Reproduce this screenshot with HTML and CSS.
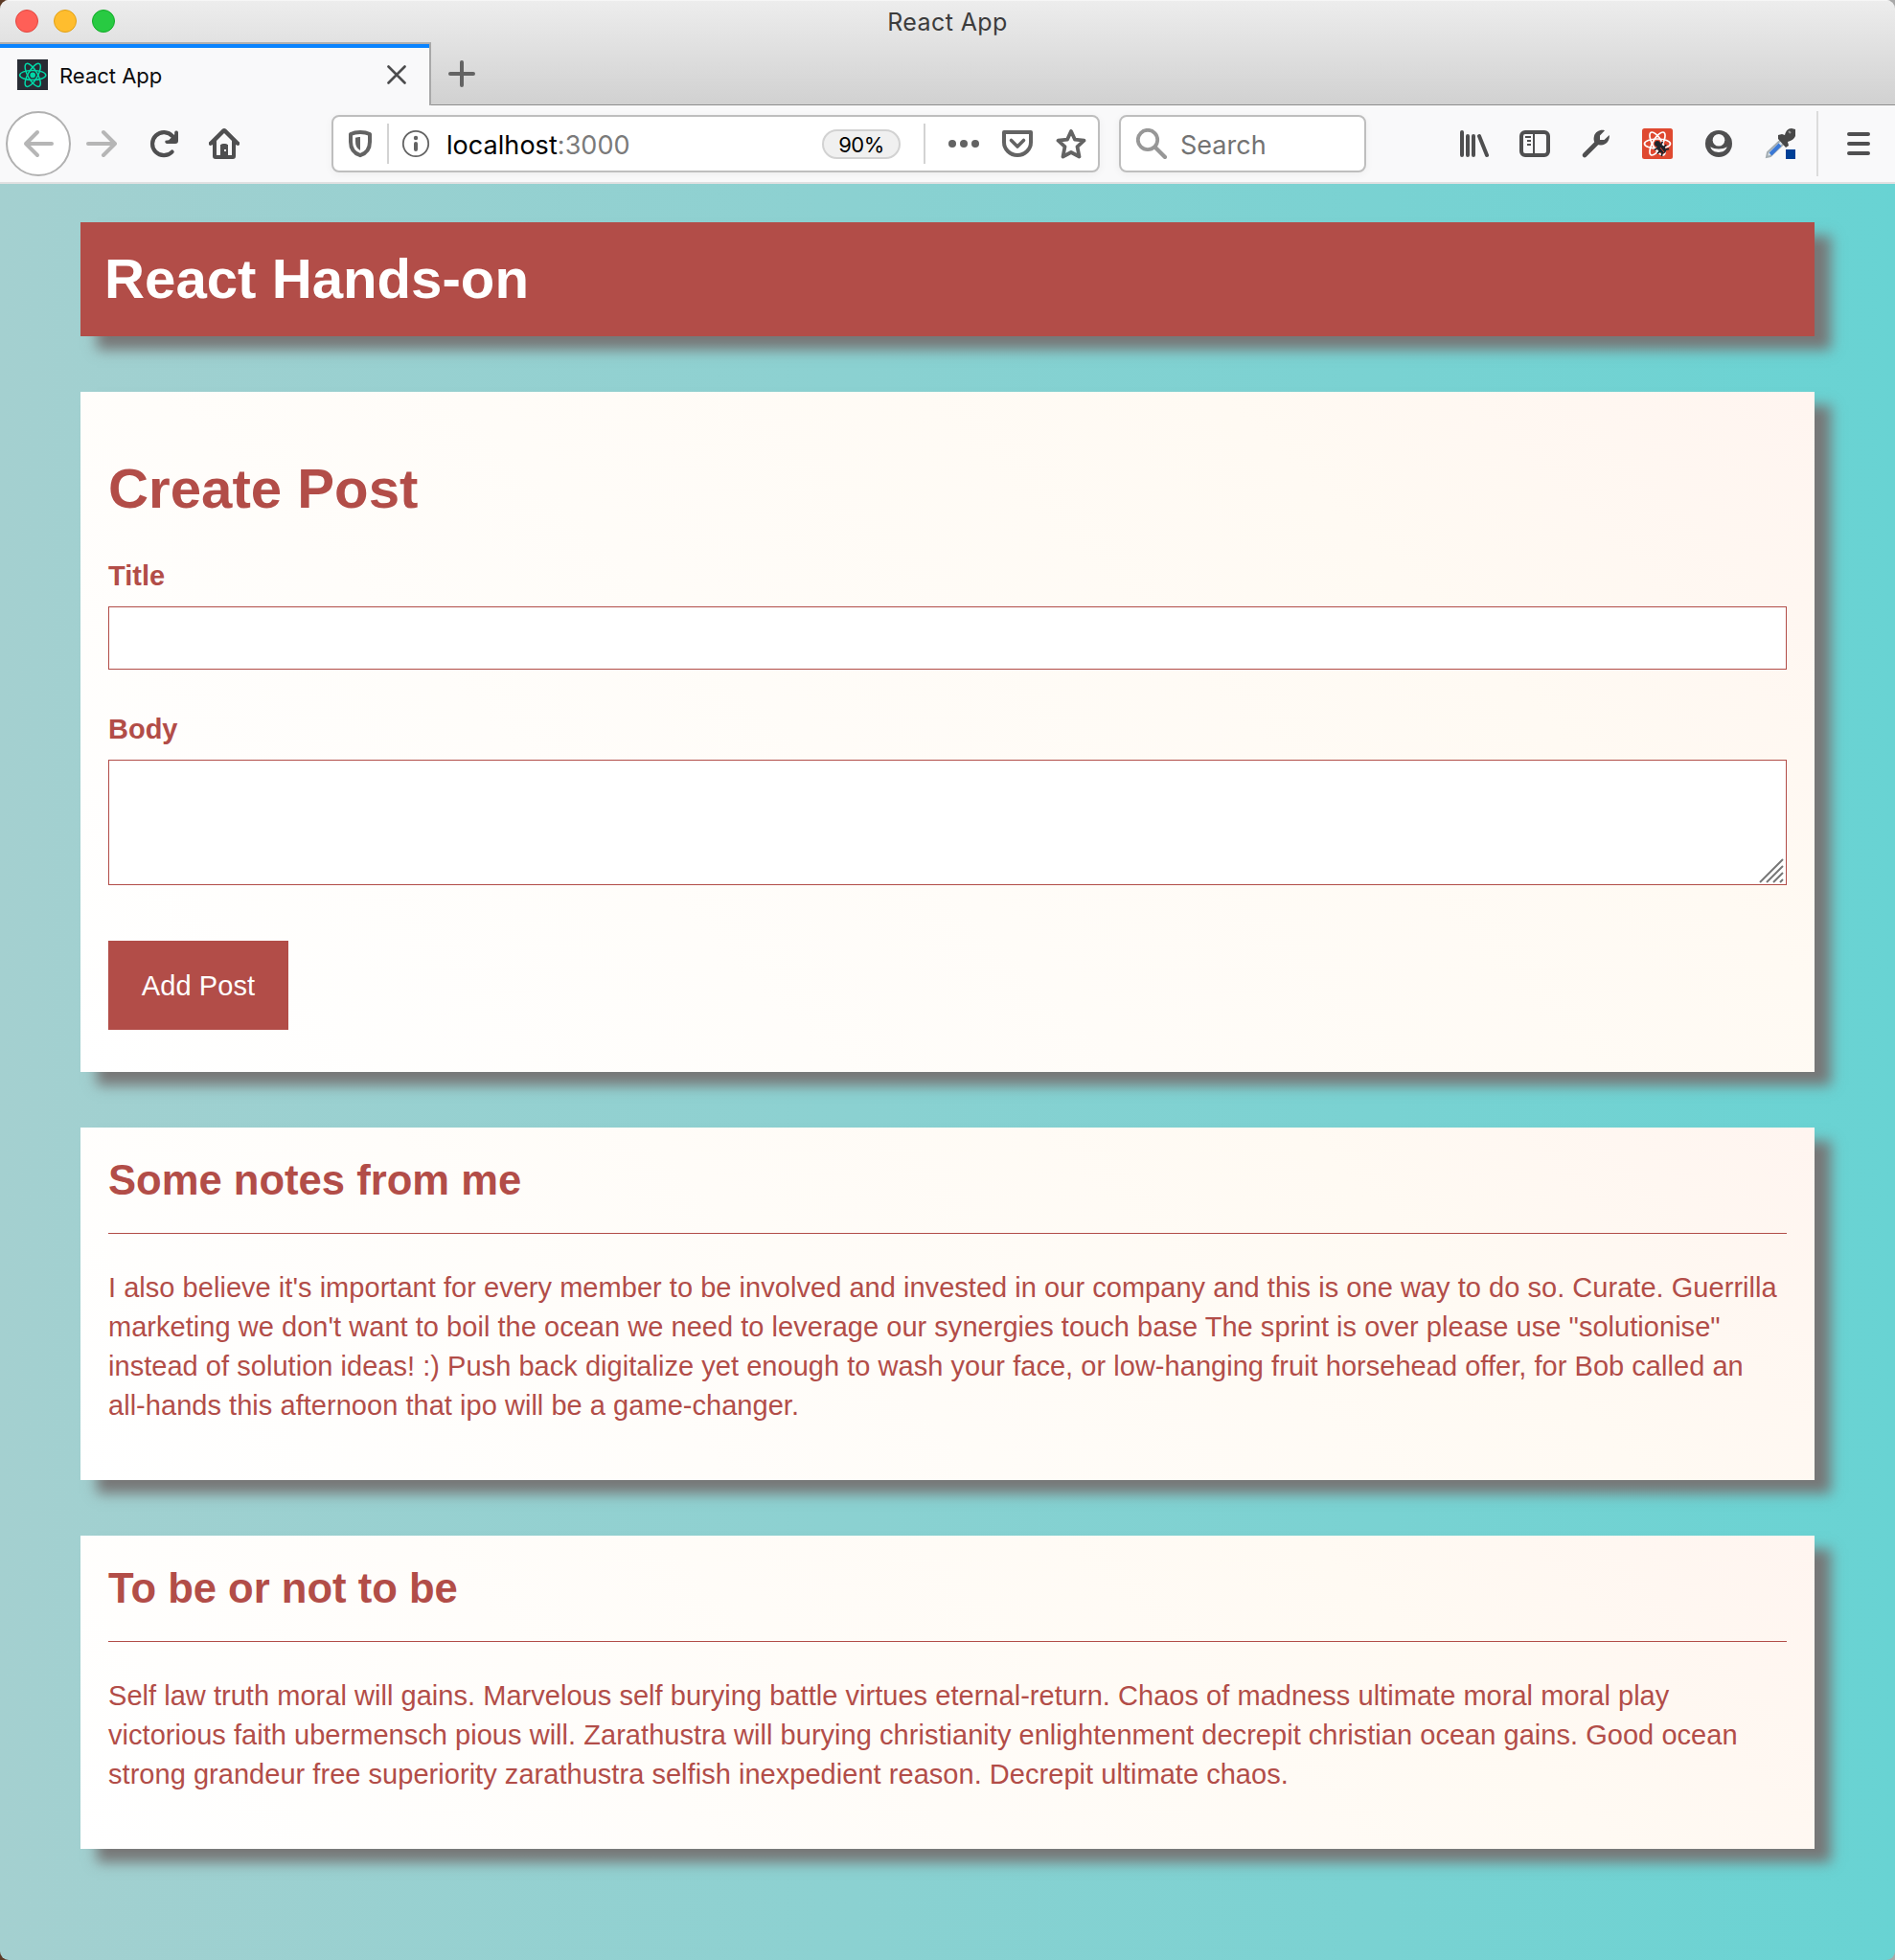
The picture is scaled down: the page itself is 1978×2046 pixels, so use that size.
FILE: index.html
```html
<!DOCTYPE html>
<html lang="en">
<head>
<meta charset="utf-8">
<title>React App</title>
<link rel="stylesheet" href="styles.css">
</head>
<body>
<div class="window">
  <header class="chrome">
    <div class="titlebar">
      <div class="lights"><i class="light red"></i><i class="light yellow"></i><i class="light green"></i></div>
      <span class="window-title">React App</span>
    </div>
    <div class="tabstrip">
      <div class="tab">
        <svg class="favicon" viewBox="0 0 32 32"><rect width="32" height="32" fill="#282c34"/><g fill="none" stroke="#00d8a8" stroke-width="1.5"><ellipse cx="16.2" cy="16.4" rx="13.6" ry="5"/><ellipse cx="16.2" cy="16.4" rx="13.6" ry="5" transform="rotate(60 16.2 16.4)"/><ellipse cx="16.2" cy="16.4" rx="13.6" ry="5" transform="rotate(120 16.2 16.4)"/></g><circle cx="16.2" cy="16.4" r="2.8" fill="#00d8a8"/></svg>
        <span class="tab-title">React App</span>
        <svg class="close" viewBox="0 0 20 20"><path d="M1.5 1.5l17 17M18.5 1.5l-17 17" stroke="#4c4c4d" stroke-width="2.6" stroke-linecap="round"/></svg>
      </div>
      <div class="strip-rest">
        <svg class="plus" viewBox="0 0 28 28"><path d="M14 2v24M2 14h24" stroke="#636363" stroke-width="4" stroke-linecap="round"/></svg>
      </div>
    </div>
    <nav class="toolbar">
      <div class="back"><svg class="icon" viewBox="0 0 32 32"><path d="M30 16H3M15 4L3 16l12 12" fill="none" stroke="#b6b6b6" stroke-width="4" stroke-linecap="round" stroke-linejoin="round"/></svg></div>
      <svg class="icon forward" viewBox="0 0 32 32"><path d="M2 16h27M18 4l12 12-12 12" fill="none" stroke="#b6b6b6" stroke-width="4" stroke-linecap="round" stroke-linejoin="round"/></svg>
      <svg class="icon reload" viewBox="0 0 32 32"><path d="M24.600 24.600A12 12 0 1 1 25 8.200" fill="none" stroke="#4f4f50" stroke-width="4.200" stroke-linecap="round"/><path d="M31 4v9a3 3 0 0 1-3 3h-9a2 2 0 0 1-1.300-3.200l3.500-.6 6-6V4a2 2 0 0 1 3.800 0z" fill="#4f4f50"/></svg>
      <svg class="icon home" viewBox="0 0 32 32"><path d="M16 0a3 3 0 0 1 2 .8L31.300 14a2 2 0 0 1-2.300 3.600L28 17v12a3 3 0 0 1-3 3H7a3 3 0 0 1-3-3V17l-1 .6A2 2 0 0 1 .7 14L14 .8A3 3 0 0 1 16 0zm0 5L8 13v15h4v-9a3 3 0 0 1 3-3h2a3 3 0 0 1 3 3v9h4V13z" fill="#4f4f50" fill-rule="evenodd"/><rect x="12" y="17" width="8" height="12" fill="#4f4f50"/><rect x="16" y="22" width="2" height="2" fill="#f9f9fa"/></svg>
      <div class="field urlbar">
        <svg class="icon shield" viewBox="0 0 32 32"><path d="M16 4c4 0 7.500.8 10 2v8c0 7-3.500 12-10 14.200C9.500 26 6 21 6 14V6c2.500-1.200 6-2 10-2z" fill="none" stroke="#636363" stroke-width="4" stroke-linejoin="round"/><path d="M16 9v14c-3.600-2-5-5-5-9v-4.200C12.500 9.300 14 9 16 9z" fill="#636363"/></svg>
        <i class="sep"></i>
        <svg class="icon info" viewBox="0 0 32 32"><circle cx="16" cy="16" r="13.200" fill="none" stroke="#636363" stroke-width="1.800"/><circle cx="16" cy="10" r="2.200" fill="#636363"/><path d="M16 16v6" stroke="#636363" stroke-width="4" stroke-linecap="round"/></svg>
        <span class="url">localhost<span class="port">:3000</span></span>
        <span class="zoom">90%</span>
        <i class="sep"></i>
        <svg class="icon dots" viewBox="0 0 32 32" fill="#636363"><circle cx="4" cy="16" r="4"/><circle cx="16" cy="16" r="4"/><circle cx="28" cy="16" r="4"/></svg>
        <svg class="icon pocket" viewBox="0 0 32 32" fill="none" stroke="#636363" stroke-width="4" stroke-linecap="round" stroke-linejoin="round"><path d="M2 4h28v10.500a14 13.500 0 0 1-28 0z"/><path d="M9.500 12.500L16 19l6.500-6.500" stroke-width="3.600"/></svg>
        <svg class="icon star" viewBox="0 0 32 32"><path d="M16 3l4 8.700 9.500 1-7 6.500 2 10.300L16 25l-8.500 4.500 2-10.300-7-6.500 9.500-1z" fill="none" stroke="#636363" stroke-width="3.800" stroke-linejoin="round"/></svg>
      </div>
      <div class="field search">
        <svg class="icon" viewBox="0 0 32 32" fill="none" stroke="#979797" stroke-linecap="round"><circle cx="12" cy="12" r="10.200" stroke-width="3.800"/><path d="M20 20l10 10" stroke-width="4.200"/></svg>
        <span class="placeholder">Search</span>
      </div>
      <div class="tools">
        <svg class="icon" viewBox="0 0 32 32" stroke="#4f4f50" stroke-width="4" stroke-linecap="round"><path d="M4 4v24M10 8v20M16 8v20M22 8l8 20"/></svg>
        <svg class="icon" viewBox="0 0 32 32" fill="none" stroke="#4f4f50"><rect x="2" y="4" width="28" height="24" rx="4" stroke-width="4"/><path d="M15 5v22M6 9h6M8 13h4M8 17h4" stroke-width="2"/></svg>
        <svg class="icon" viewBox="0 0 32 32"><path d="M4 28L18 14" stroke="#4f4f50" stroke-width="4.600" stroke-linecap="round"/><path d="M25 2.200l-5 5.300v4.500h4.500L29.800 7c.7 5-2.800 10.500-8.800 10.500-6 0-8.500-4-7-9.500 1.200-4.500 6.500-7.200 11-5.800z" fill="#4f4f50"/></svg>
        <svg class="icon" viewBox="0 0 32 32"><rect width="32" height="32" rx="2.500" fill="#df4930"/><g fill="none" stroke="#fff" stroke-width="1.700"><ellipse cx="16" cy="16" rx="13.500" ry="5"/><ellipse cx="16" cy="16" rx="13.500" ry="5" transform="rotate(60 16 16)"/><ellipse cx="16" cy="16" rx="13.500" ry="5" transform="rotate(120 16 16)"/></g><circle cx="16" cy="16" r="3" fill="#20232a"/><g transform="rotate(-45 20 21)"><ellipse cx="20" cy="21.500" rx="3.800" ry="5.500" fill="#20232a"/><path d="M14 17l4 1M13.500 22h4M14.500 27l3-2M26 17l-4 1M26.500 22h-4M25.500 27l-3-2" stroke="#20232a" stroke-width="1.700"/></g><path d="M19 20l4 5" stroke="#df4930"/></svg>
        <svg class="icon" viewBox="0 0 32 32"><circle cx="16" cy="16" r="14" fill="#4f4f50"/><circle cx="16" cy="12.200" r="6.300" fill="#f9f9fa"/><path d="M7.300 19.300c2.500 1.600 5.200 2.200 8.700 2.200s6.200-.6 8.700-2.200c-1 3.700-4.700 5.700-8.700 5.700s-7.700-2-8.700-5.700z" fill="#f9f9fa"/></svg>
        <svg class="icon" viewBox="0 0 32 32"><path d="M19 10L3 25l-1 5 4-1 16-15z" fill="#d9e4ec" stroke="#a4adb2" stroke-width="2"/><path d="M16 17L6 27" stroke="#3b79d6" stroke-width="4"/><path d="M14 7l4-1 3 1c1-4 3-7 7-7l4 1v7c-1 3-4 5-8 6l1 4-3 2-8-9z" fill="#484848"/><path d="M25 3l2 2" stroke="#999" stroke-width="2"/><rect x="22" y="22" width="10" height="10" fill="#003f96"/></svg>
      </div>
      <i class="tool-sep"></i>
      <svg class="icon menu" viewBox="0 0 32 32"><path d="M6 6h20M6 16h20M6 26h20" stroke="#4f4f50" stroke-width="4" stroke-linecap="round"/></svg>
    </nav>
  </header>
  <main class="page">
    <div class="banner"><h1>React Hands-on</h1></div>
    <section class="card form">
      <h1>Create Post</h1>
      <label for="title">Title</label>
      <input id="title" type="text">
      <label for="body">Body</label>
      <div class="textarea-wrap">
        <textarea id="body"></textarea>
        <svg class="grip" viewBox="0 0 26 26"><path d="M1 25L25 1M8 25L25 8M15 25l10-10M22 25l3-3" stroke="#777" stroke-width="2"/></svg>
      </div>
      <button type="button">Add Post</button>
    </section>
    <article class="card post">
      <h2>Some notes from me</h2>
      <p>I also believe it's important for every member to be involved and invested in our company and this is one way to do so. Curate. Guerrilla<br>marketing we don't want to boil the ocean we need to leverage our synergies touch base The sprint is over please use "solutionise"<br>instead of solution ideas! :) Push back digitalize yet enough to wash your face, or low-hanging fruit horsehead offer, for Bob called an<br>all-hands this afternoon that ipo will be a game-changer.</p>
    </article>
    <article class="card post">
      <h2>To be or not to be</h2>
      <p>Self law truth moral will gains. Marvelous self burying battle virtues eternal-return. Chaos of madness ultimate moral moral play<br>victorious faith ubermensch pious will. Zarathustra will burying christianity enlightenment decrepit christian ocean gains. Good ocean<br>strong grandeur free superiority zarathustra selfish inexpedient reason. Decrepit ultimate chaos.</p>
    </article>
  </main>
</div>
</body>
</html>
```

FILE: styles.css
```css
* { box-sizing: border-box; }
body { margin: 0; background: linear-gradient(to right, #5c3a26, #a8a8a8); }
svg { display: block; flex: none; }
.window { width: 1978px; height: 2046px; border-radius: 9px; overflow: hidden; display: flex; flex-direction: column; }

.chrome { flex: none; height: 192px; font-family: Inter, "Liberation Sans", sans-serif; background: linear-gradient(#ededed, #d1d1d1 109px); border-bottom: 2px solid #e0e0e1; }
.titlebar { height: 44px; display: grid; grid-template-columns: 200px 1fr 200px; align-items: center; border-top: 1px solid #f6f6f6; }
.lights { display: flex; gap: 16px; padding: 0 0 2px 16px; }
.light { width: 24px; height: 24px; border-radius: 50%; border: 1px solid; }
.red { background: #ff5f57; border-color: #e2463f; }
.yellow { background: #ffbd2e; border-color: #e1a116; }
.green { background: #28ca42; border-color: #12ac28; }
.window-title { text-align: center; font-size: 25px; line-height: 44px; color: #3c3c3c; letter-spacing: .4px; }
.tabstrip { height: 66px; display: flex; }
.tab { width: 450px; display: flex; align-items: center; background: linear-gradient(#0a84ff, #0a84ff) 0 0 / 100% 4px no-repeat #f9f9fa; border-top: 2px solid #b0b0b0; border-right: 2px solid #a8a8a8; padding: 0 0 0 18px; }
.favicon { width: 32px; height: 32px; }
.tab-title { flex: 1; padding-left: 12px; font-size: 22px; line-height: 30px; color: #0c0c0d; padding-top: 2px; }
.close { width: 20px; height: 20px; margin-right: 24px; }
.strip-rest { flex: 1; border-bottom: 1px solid #8e8e8e; padding: 19px 0 0 18px; }
.plus { width: 28px; height: 28px; }
.toolbar { height: 80px; display: flex; align-items: center; background: #f9f9fa; }
.icon { width: 32px; height: 32px; }
.back { width: 68px; height: 68px; margin-left: 6px; border: 2px solid #b1b1b1; border-radius: 50%; background: #fff; display: grid; place-items: center; }
.forward { margin-left: 16px; }
.reload { margin-left: 33px; }
.home { margin-left: 31px; }
.field { height: 60px; display: flex; align-items: center; background: #fff; border: 2px solid #bebebe; border-radius: 8px; box-shadow: 0 2px 8px rgba(0,0,0,.05); }
.urlbar { width: 802px; margin-left: 96px; padding-left: 12px; }
.sep { width: 2px; height: 42px; background: #d3d3d3; flex: none; }
.shield { margin-right: 12px; }
.info { margin-left: 12px; }
.url { margin-left: 16px; padding-top: 3px; flex: 1; font-size: 27px; line-height: 53px; letter-spacing: .05px; color: #000; }
.port { color: #7a7a7a; }
.zoom { width: 82px; height: 31px; margin-right: 24px; border: 2px solid #d2d2d2; border-radius: 16px; background: #f0f0f0; text-align: center; font-size: 22px; line-height: 28px; letter-spacing: -.5px; color: #000; }
.dots { margin-left: 24px; }
.pocket { margin-left: 24px; }
.star { margin: 0 12px 0 24px; }
.search { width: 258px; margin-left: 20px; padding-left: 16px; }
.placeholder { margin-left: 14px; padding-top: 2px; font-size: 27px; color: #737373; }
.tools { display: flex; gap: 32px; margin-left: 96px; }
.tool-sep { width: 2px; height: 68px; margin-left: 22px; background: #dcdcdc; }
.menu { margin-left: 26px; }

.page { flex: 1; padding: 40px 84px 0; background: linear-gradient(to right, #a4d0d0, #8bd1d1 45%, #68d3d3); font-family: "Liberation Sans", Arial, sans-serif; font-size: 29px; color: #b24d48; display: flex; flex-direction: column; gap: 58px; }
.page h1, .page h2 { margin: 0; font-weight: bold; }
.page h1 { font-size: 58.2px; line-height: 66px; }
.banner, .card { flex: none; box-shadow: 17px 14px 13px #777; }
.banner { height: 119px; padding: 26px 25px; background: #b24d48; color: #fff; }
.card { padding: 0 29px; background: linear-gradient(45deg, #fff, #fffaf3 75%, #fff5f0); }
.form { height: 710px; display: flex; flex-direction: column; align-items: flex-start; }
.form h1 { margin: 68px 0 26px; }
.form label { font-weight: bold; line-height: 33px; margin-top: 16px; }
.form input, .form textarea { display: block; width: 100%; margin: 0; border: 1px solid #b24d48; border-radius: 0; background: #fff; outline: none; resize: none; }
.form input { height: 66px; margin: 15px 0 30px; }
.textarea-wrap { position: relative; width: 100%; margin-top: 15px; }
.form textarea { height: 131px; }
.grip { position: absolute; right: 3px; bottom: 2px; width: 26px; height: 26px; }
.form button { width: 188px; height: 93px; margin-top: 58px; padding: 1px 0 0; border: 0; background: #b24d48; color: #fff; font: inherit; letter-spacing: .1px; }
.post h2 { height: 111px; padding-top: 30px; font-size: 43.6px; line-height: 50px; border-bottom: 1px solid #b24d48; }
.post p { margin: 36px 0 57px; line-height: 41px; letter-spacing: .036px; white-space: nowrap; }
```
